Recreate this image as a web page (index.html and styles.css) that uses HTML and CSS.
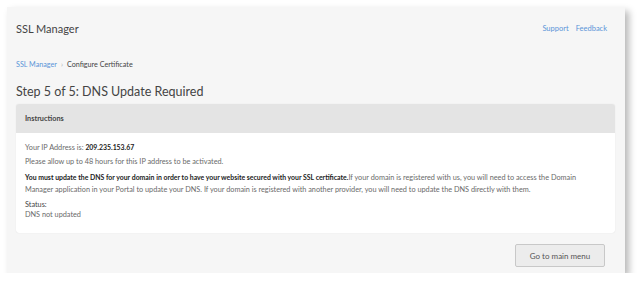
FILE: index.html
```html
<!DOCTYPE html>
<html lang="en">

<head>
	<meta charset="UTF-8">
	<meta name="viewport" content="width=device-width, initial-scale=1.0">
	<title>SSL Manager</title>
	<link rel="stylesheet" href="styles.css">
</head>

<body>

	<div class="window">
		<div class="topbar">
			<div class="app-title">SSL Manager</div>
			<div class="top-links">
				<a href="#">Support</a>
				<a href="#">Feedback</a>
			</div>
		</div>

		<div class="breadcrumb">
			<a href="#">SSL Manager</a>
			<span class="sep">&rsaquo;</span>
			<span>Configure Certificate</span>
		</div>

		<h1 class="page-title">Step 5 of 5: DNS Update Required</h1>

		<div class="panel">
			<div class="panel-head">Instructions</div>
			<div class="panel-body">
				<p class="ip">Your IP Address is: <b>209.235.153.67</b></p>
				<p class="note">Please allow up to 48 hours for this IP address to be activated.</p>
				<p class="dark"><b>You must update the DNS for your domain in order to have your website secured with your SSL certificate.</b>If your domain is registered with us, you will need to access the Domain Manager application in your Portal to update your DNS. If your domain is registered with another provider, you will need to update the DNS directly with them.</p>
				<div class="status">
					<div class="status-label">Status:</div>
					<div>DNS not updated</div>
				</div>
			</div>
		</div>

		<div class="actions">
			<button class="btn">Go to main menu</button>
		</div>
	</div>

</body>

</html>
```

FILE: styles.css
```css
body {
	margin: 0;
	background-color: #ffffff;
	font-family: 'Lato', 'Liberation Sans', sans-serif;
	color: #444;
}

a {
	color: #5b95d8;
	text-decoration: none;
}

.window {
	margin: 7px 15px 0 7px;
	height: 266px;
	box-sizing: border-box;
	padding: 0 10px 0 9px;
	background-color: #f6f6f6;
	box-shadow: 4px 4px 7px rgba(0, 0, 0, 0.28);
	display: flex;
	flex-direction: column;
}

.topbar {
	display: flex;
	justify-content: space-between;
	align-items: center;
	height: 42px;
}

.app-title {
	font-size: 11px;
	color: #444;
}

.top-links {
	display: flex;
	gap: 7px;
	font-size: 7.5px;
	padding-right: 8px;
}

.breadcrumb {
	margin-top: 11px;
	font-size: 7.2px;
	color: #444;
	display: flex;
	gap: 4px;
	align-items: center;
}

.breadcrumb .sep {
	color: #aaa;
}

.page-title {
	margin: 14px 0 0;
	font-size: 12.5px;
	font-weight: normal;
	color: #444;
	line-height: 18px;
}

.panel {
	margin-top: 3px;
	border-radius: 3px;
	overflow: hidden;
	background-color: #fff;
	box-shadow: 0 0 1px rgba(0, 0, 0, 0.15);
}

.panel-head {
	height: 29px;
	display: flex;
	align-items: center;
	padding-left: 9px;
	background-color: #e4e4e4;
	font-size: 7.3px;
	font-weight: bold;
	color: #444;
}

.panel-body {
	padding: 8px 24px 13px 9px;
	font-size: 7.3px;
	color: #6a6a6a;
	line-height: 12px;
}

.panel-body p {
	margin: 0;
}

.panel-body .ip {
	margin-bottom: 2px;
}

.panel-body .note {
	margin-bottom: 3px;
}

.panel-body b {
	font-size: 6.9px;
	color: #222;
}

.status {
	margin-top: 4px;
	line-height: 10px;
}

.status-label {
	color: #444;
}

.actions {
	display: flex;
	justify-content: flex-end;
	margin-top: 11px;
}

.btn {
	width: 90px;
	height: 23px;
	margin-right: 10px;
	border: 1px solid #c8c8c8;
	border-radius: 2px;
	background-color: #ececec;
	font-family: 'Lato', 'Liberation Sans', sans-serif;
	font-size: 8px;
	color: #555;
}
```
